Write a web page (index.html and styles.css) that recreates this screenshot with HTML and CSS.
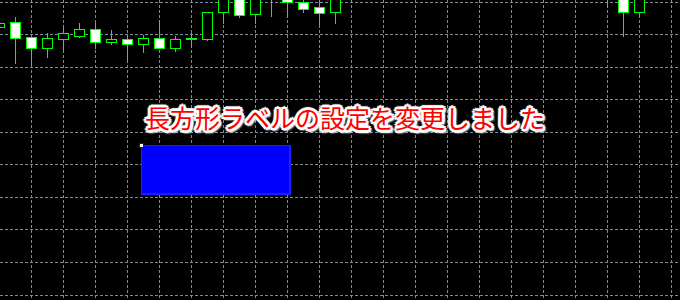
FILE: index.html
```html
<!DOCTYPE html>
<html>
<head>
    <title>Chart</title>
    <link rel="stylesheet" href="styles.css">
</head>
<body>
    <div class="chart">
        <svg class="chart-canvas" width="680" height="300" viewBox="0 0 680 300">
            <g class="grid">
                <line x1="31.5" y1="0" x2="31.5" y2="300"/>
                <line x1="63.5" y1="0" x2="63.5" y2="300"/>
                <line x1="95.5" y1="0" x2="95.5" y2="300"/>
                <line x1="127.5" y1="0" x2="127.5" y2="300"/>
                <line x1="159.5" y1="0" x2="159.5" y2="300"/>
                <line x1="191.5" y1="0" x2="191.5" y2="300"/>
                <line x1="223.5" y1="0" x2="223.5" y2="300"/>
                <line x1="255.5" y1="0" x2="255.5" y2="300"/>
                <line x1="287.5" y1="0" x2="287.5" y2="300"/>
                <line x1="319.5" y1="0" x2="319.5" y2="300"/>
                <line x1="351.5" y1="0" x2="351.5" y2="300"/>
                <line x1="383.5" y1="0" x2="383.5" y2="300"/>
                <line x1="415.5" y1="0" x2="415.5" y2="300"/>
                <line x1="447.5" y1="0" x2="447.5" y2="300"/>
                <line x1="479.5" y1="0" x2="479.5" y2="300"/>
                <line x1="511.5" y1="0" x2="511.5" y2="300"/>
                <line x1="543.5" y1="0" x2="543.5" y2="300"/>
                <line x1="575.5" y1="0" x2="575.5" y2="300"/>
                <line x1="607.5" y1="0" x2="607.5" y2="300"/>
                <line x1="639.5" y1="0" x2="639.5" y2="300"/>
                <line x1="671.5" y1="0" x2="671.5" y2="300"/>

                <line x1="0" y1="2.5" x2="680" y2="2.5"/>
                <line x1="0" y1="34.5" x2="680" y2="34.5"/>
                <line x1="0" y1="67.5" x2="680" y2="67.5"/>
                <line x1="0" y1="99.5" x2="680" y2="99.5"/>
                <line x1="0" y1="132.5" x2="680" y2="132.5"/>
                <line x1="0" y1="164.5" x2="680" y2="164.5"/>
                <line x1="0" y1="197.5" x2="680" y2="197.5"/>
                <line x1="0" y1="229.5" x2="680" y2="229.5"/>
                <line x1="0" y1="262.5" x2="680" y2="262.5"/>
                <line x1="0" y1="295.5" x2="680" y2="295.5"/>
            </g>

            <!-- wicks -->
            <g class="wick">
                <line x1="15.5" y1="17" x2="15.5" y2="64"/>
                <line x1="31.5" y1="48" x2="31.5" y2="66"/>
                <line x1="47.5" y1="33" x2="47.5" y2="58"/>
                <line x1="63.5" y1="27" x2="63.5" y2="51"/>
                <line x1="79.5" y1="23" x2="79.5" y2="38"/>
                <line x1="95.5" y1="22" x2="95.5" y2="49"/>
                <line x1="111.5" y1="30" x2="111.5" y2="45"/>
                <line x1="127.5" y1="35" x2="127.5" y2="62"/>
                <line x1="143.5" y1="35" x2="143.5" y2="53"/>
                <line x1="159.5" y1="20" x2="159.5" y2="49"/>
                <line x1="175.5" y1="36" x2="175.5" y2="52"/>
                <line x1="191.5" y1="33" x2="191.5" y2="48"/>
                <line x1="207.5" y1="39" x2="207.5" y2="41"/>
                <line x1="223.5" y1="0" x2="223.5" y2="24"/>
                <line x1="239.5" y1="0" x2="239.5" y2="18"/>
                <line x1="255.5" y1="0" x2="255.5" y2="24"/>
                <line x1="271.5" y1="0" x2="271.5" y2="17"/>
                <line x1="287.5" y1="0" x2="287.5" y2="18"/>
                <line x1="303.5" y1="0" x2="303.5" y2="13"/>
                <line x1="319.5" y1="0" x2="319.5" y2="25"/>
                <line x1="335.5" y1="0" x2="335.5" y2="24"/>
                <line x1="607.5" y1="0" x2="607.5" y2="8"/>
                <line x1="623.5" y1="0" x2="623.5" y2="37"/>
                <line x1="639.5" y1="0" x2="639.5" y2="17"/>
            </g>

            <!-- bodies -->
            <g class="body">
                <rect class="bear" x="-5.5" y="23.5" width="10" height="4"/>
                <rect class="bull" x="10.5" y="22.5" width="10" height="16"/>
                <rect class="bull" x="26.5" y="37.5" width="10" height="11"/>
                <rect class="bear" x="42.5" y="38.5" width="10" height="10"/>
                <rect class="bear" x="58.5" y="33.5" width="10" height="6"/>
                <rect class="bear" x="74.5" y="29.5" width="10" height="7"/>
                <rect class="bull" x="90.5" y="29.5" width="10" height="13"/>
                <rect class="bear" x="106.5" y="39.5" width="10" height="3"/>
                <rect class="bull" x="122.5" y="39.5" width="10" height="5"/>
                <rect class="bear" x="138.5" y="38.5" width="10" height="6"/>
                <rect class="bull" x="154.5" y="38.5" width="10" height="10"/>
                <rect class="bear" x="170.5" y="39.5" width="10" height="9"/>
                <rect class="bear" x="186.5" y="38.5" width="10" height="1"/>
                <rect class="bear" x="202.5" y="12.5" width="10" height="27"/>
                <rect class="bear" x="218.5" y="-1.5" width="10" height="14"/>
                <rect class="bull" x="234.5" y="-1.5" width="10" height="17"/>
                <rect class="bear" x="250.5" y="-1.5" width="10" height="16"/>
                <rect class="bull" x="282.5" y="-1.5" width="10" height="4"/>
                <rect class="bull" x="298.5" y="2.5" width="10" height="7"/>
                <rect class="bull" x="314.5" y="7.5" width="10" height="6"/>
                <rect class="bear" x="330.5" y="-1.5" width="10" height="14"/>
                <rect class="bull" x="618.5" y="-1.5" width="10" height="14"/>
                <rect class="bear" x="634.5" y="-1.5" width="10" height="14"/>
            </g>
        </svg>

        <div class="label">長方形ラベルの設定を変更しました</div>

        <div class="rect-label"></div>
        <div class="handle"></div>
    </div>
</body>
</html>
```

FILE: styles.css
```css
body {
    margin: 0;
    padding: 0;
    background-color: #000;
    overflow: hidden;
}

.chart {
    position: relative;
    width: 680px;
    height: 300px;
    background-color: #000;
    overflow: hidden;
}

.chart-canvas {
    display: block;
    shape-rendering: crispEdges;
}

.grid line {
    stroke: #7d8a9a;
    stroke-width: 1;
    stroke-dasharray: 3 2;
}

.wick line {
    stroke: #00ff00;
    stroke-width: 1;
}

.body rect {
    stroke: #00ff00;
    stroke-width: 1;
}

.body .bull {
    fill: #fff;
}

.body .bear {
    fill: #000;
}

.label {
    position: absolute;
    left: 145px;
    top: 104px;
    font-family: "Noto Sans CJK JP", sans-serif;
    font-size: 25px;
    line-height: 26px;
    color: #ff0000;
    white-space: nowrap;
    text-shadow:
        2px 0 0 #fff, -2px 0 0 #fff, 0 2px 0 #fff, 0 -2px 0 #fff,
        2px 2px 0 #fff, -2px -2px 0 #fff, 2px -2px 0 #fff, -2px 2px 0 #fff,
        3px 0 1px #fff, -3px 0 1px #fff, 0 3px 1px #fff, 0 -3px 1px #fff,
        2px 3px 2px #ddd, 3px 2px 2px #ddd;
}

.rect-label {
    position: absolute;
    left: 141px;
    top: 145px;
    width: 150px;
    height: 50px;
    box-sizing: border-box;
    background-color: #0000ff;
    border: 1px solid #1e1eff;
    border-right-width: 2px;
    border-bottom-width: 2px;
}

.handle {
    position: absolute;
    left: 139px;
    top: 143px;
    width: 5px;
    height: 5px;
    box-sizing: border-box;
    background-color: #fff;
    border: 1px solid #0000ff;
}
```
